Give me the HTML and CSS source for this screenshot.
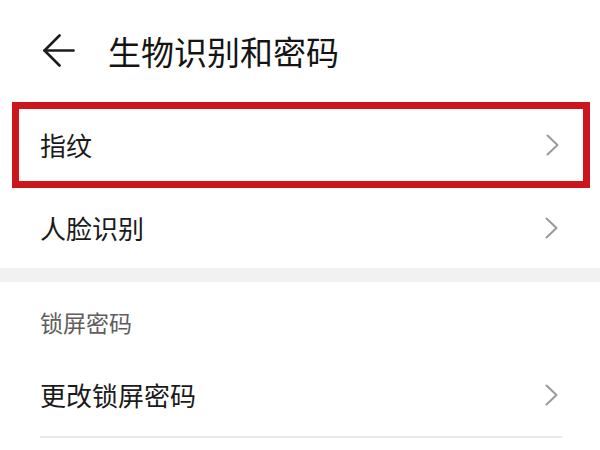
FILE: index.html
```html
<!DOCTYPE html>
<html lang="zh-CN">
<head>
<meta charset="utf-8">
<link rel="stylesheet" href="styles.css">
</head>
<body>
<div class="page">
  <header class="topbar">
    <svg class="back" width="32" height="33" viewBox="0 0 32 33">
      <polyline points="16.5,1.5 1.5,16.5 16.5,31.5" fill="none" stroke="#1c1c1c" stroke-width="2.6" stroke-linecap="round" stroke-linejoin="round"/>
      <line x1="1.5" y1="16.5" x2="30.5" y2="16.5" stroke="#1c1c1c" stroke-width="2.6" stroke-linecap="round"/>
    </svg>
    <h1 class="title">生物识别和密码</h1>
  </header>

  <div class="row row-highlight">
    <span class="label">指纹</span>
    <svg class="chev" width="13" height="22" viewBox="0 0 13 22"><polyline points="1.5,1.5 11.5,11 1.5,20.5" fill="none" stroke="#9a9a9a" stroke-width="2" stroke-linecap="round" stroke-linejoin="round"/></svg>
  </div>

  <div class="row row-face">
    <span class="label">人脸识别</span>
    <svg class="chev" width="13" height="22" viewBox="0 0 13 22"><polyline points="1.5,1.5 11.5,11 1.5,20.5" fill="none" stroke="#9a9a9a" stroke-width="2" stroke-linecap="round" stroke-linejoin="round"/></svg>
  </div>

  <div class="band"></div>

  <div class="section-title">锁屏密码</div>

  <div class="row row-pwd">
    <span class="label">更改锁屏密码</span>
    <svg class="chev" width="13" height="22" viewBox="0 0 13 22"><polyline points="1.5,1.5 11.5,11 1.5,20.5" fill="none" stroke="#9a9a9a" stroke-width="2" stroke-linecap="round" stroke-linejoin="round"/></svg>
  </div>
  <div class="divider"></div>
</div>
</body>
</html>
```

FILE: styles.css
```css
html, body {
  margin: 0;
  padding: 0;
  background: #ffffff;
}

body {
  font-family: "Noto Sans CJK SC", "Noto Sans", sans-serif;
  color: #1a1a1a;
  width: 600px;
  height: 450px;
  overflow: hidden;
}

.page {
  display: flex;
  flex-direction: column;
}

.topbar {
  height: 102px;
  display: flex;
  align-items: center;
  padding-left: 43px;
  box-sizing: border-box;
}

.back {
  display: block;
  margin-top: -2px;
}

.title {
  margin: 0 0 0 33px;
  font-size: 33px;
  font-weight: 400;
  line-height: 40px;
  color: #141414;
}

.row {
  display: flex;
  align-items: center;
  justify-content: space-between;
  box-sizing: border-box;
}

.label {
  font-size: 26px;
  line-height: 34px;
  color: #1a1a1a;
}

.chev {
  display: block;
}

.row-highlight {
  height: 86px;
  margin: 0 10px 0 12px;
  border: 7px solid #cc161c;
  padding: 0 24px 0 21px;
}

.row-face {
  height: 80px;
  padding: 0 42px 0 40px;
}

.band {
  height: 14px;
  background: #f1f1f1;
}

.section-title {
  padding: 25px 0 17px 40px;
  font-size: 23px;
  line-height: 30px;
  color: #5e5e5e;
}

.row-pwd {
  height: 82px;
  padding: 0 42px 0 40px;
}

.divider {
  height: 2px;
  margin: 0 38px 0 40px;
  background: #e9e9e9;
}
```
